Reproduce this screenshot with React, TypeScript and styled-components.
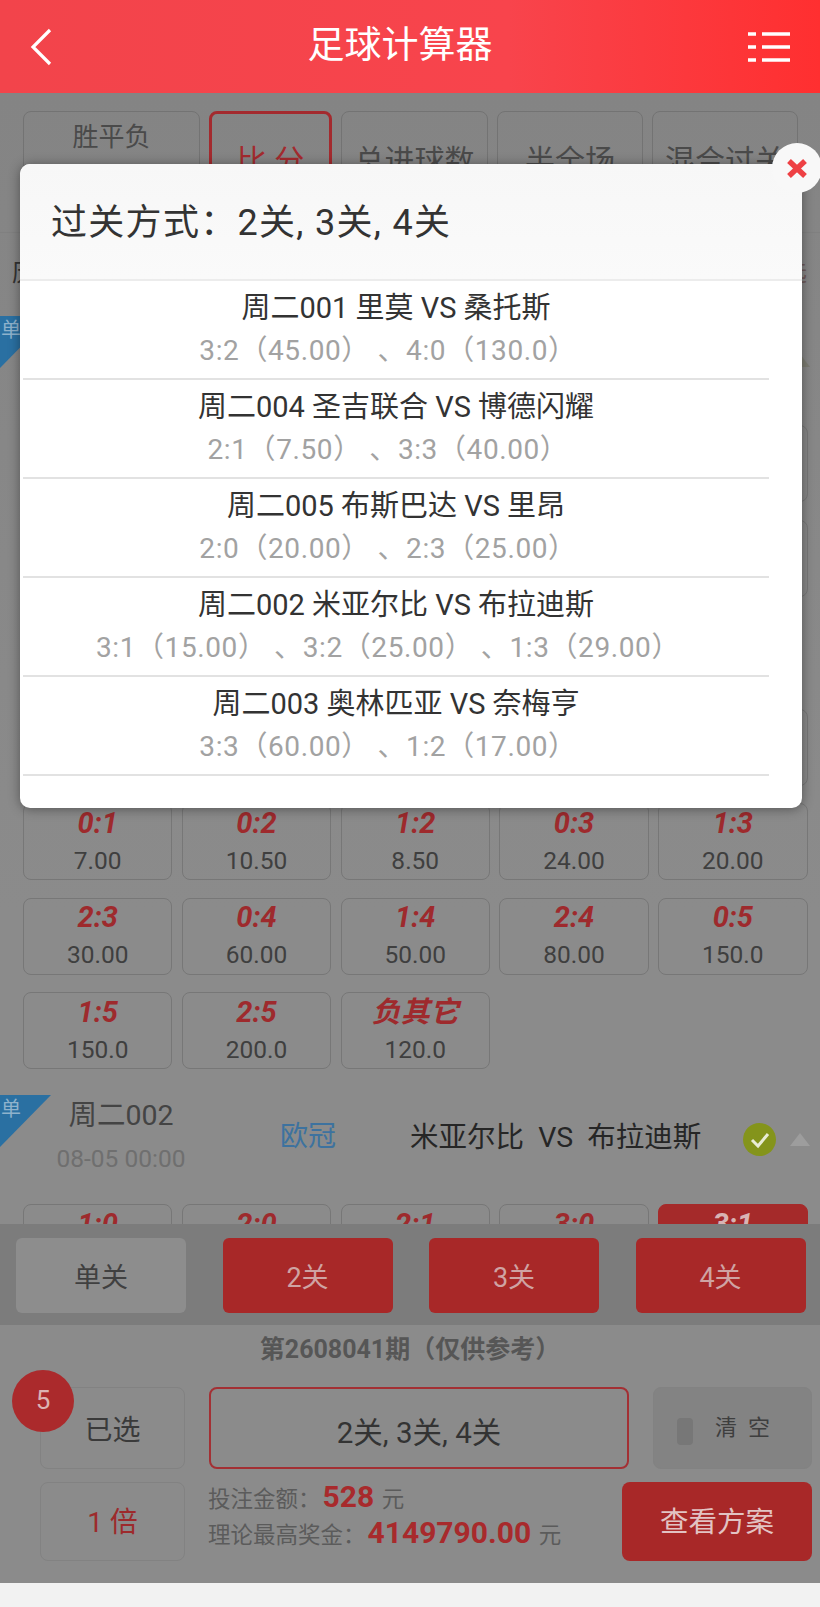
import React from 'react';
import styled, { createGlobalStyle } from 'styled-components';

interface Odd {
    score: string;
    value: string;
    selected?: boolean;
    newRow?: boolean;
}

const firstMatchOdds: Odd[] = [
    { score: '1:0', value: '7.50' },
    { score: '2:0', value: '11.00' },
    { score: '2:1', value: '8.00' },
    { score: '3:0', value: '25.00' },
    { score: '3:1', value: '20.00' },
    { score: '3:2', value: '45.00', selected: true },
    { score: '4:0', value: '130.0', selected: true },
    { score: '4:1', value: '70.00' },
    { score: '4:2', value: '90.00' },
    { score: '5:0', value: '200.0' },
    { score: '5:1', value: '150.0' },
    { score: '5:2', value: '250.0' },
    { score: '胜其它', value: '100.0' },
    { score: '0:0', value: '9.00', newRow: true },
    { score: '1:1', value: '5.50' },
    { score: '2:2', value: '14.00' },
    { score: '3:3', value: '60.00' },
    { score: '平其它', value: '300.0' },
    { score: '0:1', value: '7.00' },
    { score: '0:2', value: '10.50' },
    { score: '1:2', value: '8.50' },
    { score: '0:3', value: '24.00' },
    { score: '1:3', value: '20.00' },
    { score: '2:3', value: '30.00' },
    { score: '0:4', value: '60.00' },
    { score: '1:4', value: '50.00' },
    { score: '2:4', value: '80.00' },
    { score: '0:5', value: '150.0' },
    { score: '1:5', value: '150.0' },
    { score: '2:5', value: '200.0' },
    { score: '负其它', value: '120.0' },
];

const secondMatchOdds: Odd[] = [
    { score: '1:0', value: '6.00' },
    { score: '2:0', value: '9.00' },
    { score: '2:1', value: '7.50' },
    { score: '3:0', value: '18.00' },
    { score: '3:1', value: '15.00', selected: true },
];

const tickets = [
    { title: '周二001 里莫 VS 桑托斯', odds: '3:2（45.00） 、4:0（130.0）' },
    { title: '周二004 圣吉联合 VS 博德闪耀', odds: '2:1（7.50） 、3:3（40.00）' },
    { title: '周二005 布斯巴达 VS 里昂', odds: '2:0（20.00） 、2:3（25.00）' },
    { title: '周二002 米亚尔比 VS 布拉迪斯', odds: '3:1（15.00） 、3:2（25.00） 、1:3（29.00）' },
    { title: '周二003 奥林匹亚 VS 奈梅亨', odds: '3:3（60.00） 、1:2（17.00）' },
];

const MatchBlock = ({
    code,
    date,
    teams,
    odds,
    dimArrow,
}: {
    code: string;
    date: string;
    teams: string;
    odds: Odd[];
    dimArrow?: boolean;
}) => (
    <>
        <MatchHead>
            <SingleTag>
                <SingleTagText>单</SingleTagText>
            </SingleTag>
            <MatchTime>
                <MatchCode>{code}</MatchCode>
                <MatchDate>{date}</MatchDate>
            </MatchTime>
            <MatchInfo>
                <League>欧冠</League>
                <Teams>{teams}</Teams>
                <CheckMark viewBox="0 0 33 33">
                    <circle cx="16.5" cy="16.5" r="16.5" fill="#84941b" />
                    <path d="M9 17l6 6 10-12" fill="none" stroke="#e8ecd4" strokeWidth="3" />
                </CheckMark>
                <Collapse $dim={dimArrow} />
            </MatchInfo>
        </MatchHead>
        <OddsGrid>
            {odds.map((odd) => (
                <OddCell key={odd.score} $selected={odd.selected} $newRow={odd.newRow}>
                    <OddScore $selected={odd.selected}>{odd.score}</OddScore>
                    <OddValue $selected={odd.selected}>{odd.value}</OddValue>
                </OddCell>
            ))}
        </OddsGrid>
    </>
);

export default function App() {
    return (
        <Page>
            <GlobalStyle />
            <TopBar>
                <svg width="22" height="38" viewBox="0 0 22 38">
                    <path d="M20 2L3 19l17 17" fill="none" stroke="#fff" strokeWidth="3.2" />
                </svg>
                <TopTitle>足球计算器</TopTitle>
                <svg width="42" height="32" viewBox="0 0 42 32">
                    <g stroke="#fff" strokeWidth="3.4">
                        <path d="M0 3h8M14 3h28M0 16h8M14 16h28M0 29h8M14 29h28" />
                    </g>
                </svg>
            </TopBar>

            <Body>
                <Scroller>
                    <Tabs>
                        <Tab>
                            <TabTop>胜平负</TabTop>
                            <TabTop>让球胜平负</TabTop>
                        </Tab>
                        <Tab $active>比 分</Tab>
                        <Tab>总进球数</Tab>
                        <Tab>半全场</Tab>
                        <Tab>混合过关</Tab>
                    </Tabs>
                    <Strip>
                        <StripText>历史</StripText>
                        <StripText $red>筛选</StripText>
                    </Strip>
                    <MatchBlock code="周二001" date="08-05 00:00" teams="里莫 VS 桑托斯" odds={firstMatchOdds} dimArrow />
                    <NextMatch>
                        <MatchBlock code="周二002" date="08-05 00:00" teams="米亚尔比  VS  布拉迪斯" odds={secondMatchOdds} />
                    </NextMatch>
                </Scroller>

                <Panel>
                    <PassBar>
                        <PassButton>单关</PassButton>
                        <PassButton $on>2关</PassButton>
                        <PassButton $on>3关</PassButton>
                        <PassButton $on>4关</PassButton>
                    </PassBar>
                    <Period>第2608041期（仅供参考）</Period>
                    <PanelRow>
                        <SmallBox>
                            <CountBadge>5</CountBadge>
                            已选
                        </SmallBox>
                        <PassSummary>2关, 3关, 4关</PassSummary>
                        <ClearBox>
                            <ClearIcon />
                            <ClearText>清空</ClearText>
                        </ClearBox>
                    </PanelRow>
                    <PanelRow>
                        <SmallBox $short $red>1 倍</SmallBox>
                        <Totals>
                            <TotalLine>
                                投注金额：<TotalNumber>528</TotalNumber> 元
                            </TotalLine>
                            <TotalLine>
                                理论最高奖金：<TotalNumber>4149790.00</TotalNumber> 元
                            </TotalLine>
                        </Totals>
                        <ViewButton>查看方案</ViewButton>
                    </PanelRow>
                </Panel>
            </Body>

            <FooterBar />

            <Modal>
                <ModalHead>过关方式：2关, 3关, 4关</ModalHead>
                {tickets.map((ticket) => (
                    <TicketRow key={ticket.title}>
                        <TicketTitle>{ticket.title}</TicketTitle>
                        <TicketOdds>{ticket.odds}</TicketOdds>
                    </TicketRow>
                ))}
                <CloseButton>
                    <svg width="20" height="19" viewBox="0 0 20 19">
                        <path d="M2 2l16 15M18 2L2 17" stroke="#ee4044" strokeWidth="5.5" fill="none" />
                    </svg>
                </CloseButton>
            </Modal>
        </Page>
    );
}

const GlobalStyle = createGlobalStyle`
    html, body {
        margin: 0;
        padding: 0;
        background: #f2f2f2;
    }
    * {
        box-sizing: border-box;
    }
`;

const Page = styled.div`
    position: relative;
    width: 820px;
    height: 1607px;
    overflow: hidden;
    display: flex;
    flex-direction: column;
    font-family: Roboto, 'Noto Sans CJK SC', sans-serif;
`;

const TopBar = styled.header`
    height: 93px;
    flex-shrink: 0;
    padding: 0 30px;
    display: flex;
    align-items: center;
    justify-content: space-between;
    background: linear-gradient(90deg, #f2444b 0%, #f8444c 62%, #ff2f30 100%);
`;

const TopTitle = styled.h1`
    margin: 0 0 2px;
    color: #fff;
    font-size: 37px;
    font-weight: 400;
    line-height: 1;
`;

const Body = styled.main`
    flex: 1;
    min-height: 0;
    display: flex;
    flex-direction: column;
    background: linear-gradient(180deg, #848484 0%, #8b8b8b 55%);
`;

const Scroller = styled.div`
    flex: 1;
    min-height: 0;
    overflow: hidden;
`;

const Tabs = styled.nav`
    display: grid;
    grid-template-columns: 177px 123px 147px 146px 146px;
    gap: 9px;
    padding: 18px 0 0 23px;
    height: 112px;
`;

const Tab = styled.div<{ $active?: boolean }>`
    height: 94px;
    display: flex;
    flex-direction: column;
    align-items: center;
    justify-content: center;
    border: ${(props) => (props.$active ? '3px solid #a32a2e' : '1px solid #737373')};
    border-radius: 8px;
    color: ${(props) => (props.$active ? '#a32a2e' : '#4a4a4a')};
    font-size: 30px;
    white-space: nowrap;
`;

const TabTop = styled.span`
    position: relative;
    top: 3px;
    font-size: 26px;
    line-height: 47px;
`;

const Strip = styled.div`
    height: 84px;
    margin-top: 27px;
    padding: 0 13px 0 12px;
    display: flex;
    justify-content: space-between;
    border-top: 1px solid #808080;
`;

const StripText = styled.span<{ $red?: boolean }>`
    margin-top: 25px;
    font-size: 24px;
    line-height: 30px;
    color: ${(props) => (props.$red ? '#6e5a5a' : '#333')};
`;

const MatchHead = styled.div`
    position: relative;
    height: 109px;
    display: flex;
    align-items: flex-start;
`;

const SingleTag = styled.div`
    position: absolute;
    left: 0;
    top: 0;
    width: 51px;
    height: 52px;
    background: #2a70a2;
    clip-path: polygon(0 0, 100% 0, 0 100%);
`;

const SingleTagText = styled.span`
    display: block;
    padding: 2px 0 0 1px;
    color: #8fb2cc;
    font-size: 20px;
    line-height: 24px;
`;

const MatchTime = styled.div`
    width: 242px;
    padding-top: 1px;
    display: flex;
    flex-direction: column;
    align-items: center;
    gap: 3px;
`;

const MatchCode = styled.span`
    color: #444;
    font-size: 28.5px;
    line-height: 40px;
`;

const MatchDate = styled.span`
    color: #6f6f6f;
    font-size: 24.5px;
    line-height: 40px;
    white-space: nowrap;
`;

const MatchInfo = styled.div`
    height: 78px;
    flex: 1;
    display: flex;
    align-items: center;
`;

const League = styled.span`
    width: 168px;
    padding-left: 38px;
    color: #3d729f;
    font-size: 28px;
`;

const Teams = styled.span`
    width: 333px;
    color: #262626;
    font-size: 28.5px;
    white-space: pre;
`;

const CheckMark = styled.svg`
    width: 33px;
    height: 33px;
    margin-top: 11px;
`;

const Collapse = styled.span<{ $dim?: boolean }>`
    margin: 11px 0 0 14px;
    border-left: 10px solid transparent;
    border-right: 10px solid transparent;
    border-bottom: 13px solid ${(props) => (props.$dim ? '#7c7c72' : '#9d9d9d')};
`;

const OddsGrid = styled.div`
    display: grid;
    grid-template-columns: repeat(5, 149.4px);
    column-gap: 9.4px;
    row-gap: 17.5px;
    padding-left: 23px;
`;

const OddCell = styled.div<{ $selected?: boolean; $newRow?: boolean }>`
    height: 77px;
    grid-column-start: ${(props) => (props.$newRow ? 1 : 'auto')};
    display: flex;
    flex-direction: column;
    align-items: center;
    justify-content: center;
    border: 1px solid ${(props) => (props.$selected ? '#a52a2a' : '#777')};
    border-radius: 8px;
    background: ${(props) => (props.$selected ? '#a52a2a' : 'transparent')};
`;

const OddScore = styled.span<{ $selected?: boolean }>`
    color: ${(props) => (props.$selected ? '#d8b4b4' : '#9e2a2d')};
    font-size: 29px;
    font-weight: 700;
    font-style: italic;
    line-height: 37px;
`;

const OddValue = styled.span<{ $selected?: boolean }>`
    color: ${(props) => (props.$selected ? '#d8b4b4' : '#3f3f3f')};
    font-size: 24.5px;
    line-height: 37px;
`;

const NextMatch = styled.section`
    margin-top: 26px;
`;

const Panel = styled.footer`
    height: 359px;
    flex-shrink: 0;
`;

const PassBar = styled.div`
    height: 101px;
    padding: 14px 0 0 16px;
    display: grid;
    grid-template-columns: repeat(4, 170px);
    grid-template-rows: 75px;
    column-gap: 36.5px;
    background: #7c7c7c;
`;

const PassButton = styled.div<{ $on?: boolean }>`
    display: flex;
    align-items: center;
    justify-content: center;
    border-radius: 6px;
    background: ${(props) => (props.$on ? '#a82828' : '#8d8d8d')};
    color: ${(props) => (props.$on ? '#cfa3a3' : '#404040')};
    font-size: 27px;
`;

const Period = styled.div`
    height: 50px;
    margin-bottom: 12px;
    text-align: center;
    color: #565656;
    font-size: 25px;
    font-weight: 700;
    line-height: 50px;
`;

const PanelRow = styled.div`
    display: flex;
    gap: 24px;
    padding-left: 40px;
    margin-bottom: 13px;
`;

const SmallBox = styled.div<{ $short?: boolean; $red?: boolean }>`
    position: relative;
    width: 145px;
    height: ${(props) => (props.$short ? '79px' : '82px')};
    padding-bottom: ${(props) => (props.$short ? '4px' : '0')};
    flex-shrink: 0;
    display: flex;
    align-items: center;
    justify-content: center;
    border: 1px solid #828282;
    border-radius: 8px;
    color: ${(props) => (props.$red ? '#9d2a2c' : '#3a3a3a')};
    font-size: 28px;
    white-space: pre;
`;

const CountBadge = styled.span`
    position: absolute;
    left: -29px;
    top: -18px;
    width: 62px;
    height: 62px;
    padding-bottom: 3px;
    display: flex;
    align-items: center;
    justify-content: center;
    border-radius: 50%;
    background: #ab2a2c;
    color: #dcb3b3;
    font-size: 26px;
`;

const PassSummary = styled.div`
    width: 420px;
    padding-top: 3px;
    display: flex;
    align-items: center;
    justify-content: center;
    border: 2px solid #a33034;
    border-radius: 8px;
    color: #333;
    font-size: 29.5px;
`;

const ClearBox = styled.div`
    width: 159px;
    padding-left: 23px;
    display: flex;
    align-items: center;
    gap: 22px;
    border: 1px solid #828282;
    border-radius: 8px;
    background: #838383;
`;

const ClearIcon = styled.span`
    width: 16px;
    height: 27px;
    margin-top: 6px;
    border-radius: 4px;
    background: #777;
`;

const ClearText = styled.span`
    padding-bottom: 6px;
    color: #3e3e3e;
    font-size: 22px;
    letter-spacing: 11px;
    white-space: nowrap;
`;

const Totals = styled.div`
    flex: 1;
    margin: -2px 0 0 -1px;
    display: flex;
    flex-direction: column;
    gap: 3px;
`;

const TotalLine = styled.div`
    display: flex;
    align-items: center;
    height: 33px;
    color: #5b5b5b;
    font-size: 22.5px;
    white-space: pre;
`;

const TotalNumber = styled.strong`
    padding: 0 2px;
    color: #a82a2c;
    font-size: 30px;
    font-weight: 700;
`;

const ViewButton = styled.div`
    width: 190px;
    height: 79px;
    margin-right: 8px;
    padding-bottom: 4px;
    display: flex;
    align-items: center;
    justify-content: center;
    border-radius: 8px;
    background: #a82828;
    color: #e2c3c3;
    font-size: 28.5px;
`;

const FooterBar = styled.div`
    height: 24px;
    flex-shrink: 0;
    background: #f2f2f2;
`;

const Modal = styled.section`
    position: absolute;
    left: 20px;
    top: 164px;
    width: 782px;
    height: 644px;
    border-radius: 10px;
    background: #fff;
    box-shadow: 0 1px 12px rgba(0, 0, 0, 0.4);
`;

const ModalHead = styled.div`
    height: 117px;
    padding: 36px 0 0 31px;
    border-radius: 10px 10px 0 0;
    background: linear-gradient(180deg, #f7f7f7, #fafafa);
    border-bottom: 2px solid #ececec;
    color: #333;
    font-size: 36px;
    letter-spacing: 1.3px;
    line-height: 46px;
`;

const TicketRow = styled.div`
    width: 746px;
    height: 99px;
    margin-left: 3px;
    padding-top: 8px;
    text-align: center;
    border-bottom: 2px solid #e2e2e2;
`;

const TicketTitle = styled.div`
    color: #333;
    font-size: 29px;
    line-height: 38px;
`;

const TicketOdds = styled.div`
    margin-top: 5px;
    padding-right: 16px;
    color: #a2a2a2;
    font-size: 28px;
    letter-spacing: 0.6px;
    line-height: 38px;
    white-space: pre;
`;

const CloseButton = styled.div`
    position: absolute;
    right: -20px;
    top: -21px;
    width: 50px;
    height: 50px;
    display: flex;
    align-items: center;
    justify-content: center;
    border-radius: 50%;
    background: #f8f8f8;
`;
